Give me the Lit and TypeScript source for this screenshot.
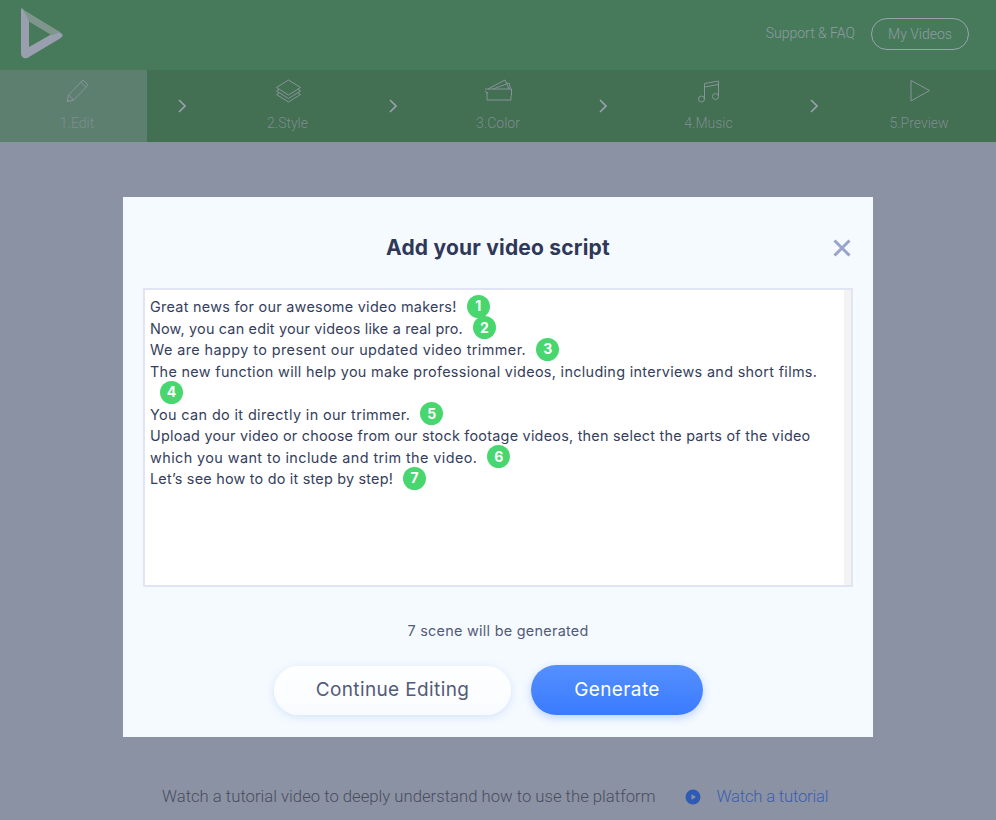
import { LitElement, html, css, svg } from "lit";
import { customElement } from "lit/decorators.js";
import { styleMap } from "lit/directives/style-map.js";

@customElement("app-root")
export class AppRoot extends LitElement {
  static styles = css`
    :host {
      display: block;
      position: relative;
      width: 996px;
      height: 820px;
      overflow: hidden;
      background: #8b92a4;
      font-family: Roboto, "Liberation Sans", sans-serif;
      font-weight: 300;
    }
    .top {
      height: 70px;
      background: #477a5b;
      display: flex;
      align-items: center;
      justify-content: space-between;
      padding: 0 27px 2px 20px;
      box-sizing: border-box;
    }
    .logo { display: block; width: 44px; height: 52px; }
    .nav { display: flex; align-items: center; gap: 16px; color: #8f9aa3; font-size: 14px; }
    .support { position: relative; top: -1px; }
    .myvideos {
      width: 98px;
      height: 32px;
      box-sizing: border-box;
      border: 1px solid #9aa1b0;
      border-radius: 16px;
      display: flex;
      align-items: center;
      justify-content: center;
    }
    .steps {
      height: 72px;
      background: #436f52;
      display: flex;
      color: #7d8e90;
      font-size: 14px;
    }
    .step {
      width: 147px;
      flex: none;
      display: flex;
      flex-direction: column;
      align-items: center;
      padding: 8px 0 0 7px;
      box-sizing: border-box;
      gap: 9px;
    }
    .step.active { background: #5d7f70; }
    .step span { line-height: 18px; }
    .step svg {
      display: block;
      width: 27px;
      height: 27px;
      fill: none;
      stroke: #87949a;
      stroke-width: 1;
      stroke-linejoin: round;
    }
    .sep {
      width: 63.5px;
      flex: none;
      display: flex;
      align-items: center;
      justify-content: center;
      padding: 0 0 0 7px;
      box-sizing: border-box;
    }
    .sep svg {
      display: block;
      width: 8px;
      height: 14px;
      fill: none;
      stroke: #9aa1b0;
      stroke-width: 1.6;
    }
    .tutorial {
      position: absolute;
      left: 162px;
      top: 787px;
      display: flex;
      align-items: center;
      font-size: 16.7px;
      line-height: 20px;
      color: #4a4e5c;
    }
    .tutorial svg { display: block; width: 16px; height: 16px; margin: 0 15px 0 30px; }
    .tutorial .link { color: #3b5fb0; letter-spacing: -0.2px; }
    .overlay {
      position: absolute;
      left: 123px;
      top: 197px;
      width: 750px;
      height: 540px;
      background: #f5faff;
      box-sizing: border-box;
      padding: 37px 20px 0;
      display: flex;
      flex-direction: column;
      align-items: center;
      font-family: Inter, "Noto Sans", sans-serif;
      font-weight: 400;
      color: #353e5c;
    }
    h1 {
      margin: 0;
      font-size: 21px;
      line-height: 28px;
      font-weight: 700;
      color: #2f3857;
      letter-spacing: 0.2px;
    }
    .close {
      position: absolute;
      right: 22px;
      top: 42px;
      width: 18px;
      height: 18px;
      display: block;
      stroke: #98a4cc;
      stroke-width: 3;
      fill: none;
    }
    .area {
      margin-top: 26px;
      width: 710px;
      height: 299px;
      flex: none;
      box-sizing: border-box;
      border: 2px solid #e0e4f3;
      background: #fff;
      display: flex;
    }
    .lines {
      flex: 1;
      padding: 6px 0 0 5px;
      font-size: 14.4px;
      line-height: 21.5px;
      color: #353e5c;
    }
    .line { display: block; }
    .bar { width: 7px; background: #f3f3f3; flex: none; }
    .badge {
      display: inline-flex;
      align-items: center;
      justify-content: center;
      width: 23px;
      height: 23px;
      margin: -2px 0 -2px 10px;
      vertical-align: middle;
      position: relative;
      top: -2px;
      border-radius: 50%;
      background: #48d66e;
      color: #fff;
      font-size: 14px;
      font-weight: 700;
      line-height: 1;
      letter-spacing: 0;
    }
    .count {
      margin-top: 34px;
      font-size: 14.4px;
      line-height: 20px;
      color: #535b78;
      letter-spacing: 0.28px;
    }
    .buttons { display: flex; align-items: center; gap: 20px; margin: 24px 19px 0 0; }
    .btn {
      display: flex;
      align-items: center;
      justify-content: center;
      box-sizing: border-box;
      font-size: 19px;
      letter-spacing: 0.38px;
      padding-bottom: 2px;
    }
    .ghost {
      width: 237px;
      height: 49px;
      border-radius: 25px;
      background: linear-gradient(#ffffff, #f8fbff);
      color: #535b78;
      box-shadow: 0 2px 8px rgba(120, 160, 230, 0.25);
    }
    .primary {
      width: 172px;
      height: 50px;
      border-radius: 25px;
      background: linear-gradient(#5590ff, #3a7bff);
      color: #fff;
      box-shadow: 0 3px 8px rgba(60, 120, 255, 0.3);
    }
  `;

  render() {
    const stepsData: [string, unknown][] = [
      ["1.Edit", svg`<path d="M3 23.500l1.600-6.500L19 2l5.200 5L9.600 22z M3 23.500l6.600-1.500 M4.600 17l5 5 M16.800 4.200l5.200 5.100"/>`],
      ["2.Style", svg`<path d="M14.500 2l12 7.500-12 7.500-12-7.500z"/><path d="M5 11.300L2.500 13l12 7.500 12-7.500-2.500-1.700"/><path d="M5 15L2.500 16.500l12 7.500 12-7.500L24 15"/>`],
      ["3.Color", svg`<path d="M-.5 11h27v6.500l-.5.5v4H2v-7.500L-.5 13z"/><path d="M3 11L20 2l4 9"/><path d="M8 11L24 5 25.500 11"/><circle cx="2.500" cy="15" r=".4"/>`],
      ["4.Music", svg`<path d="M9.500 21V5.500l14-2.500V18"/><path d="M9.500 9l14-2.500"/><circle cx="6.500" cy="21" r="3"/><circle cx="20.500" cy="18.500" r="3"/>`],
      ["5.Preview", svg`<path d="M5 2.500v20.500L23.500 12.500z"/>`],
    ];
    // letter-spacing per line, fitted to the measured width of each line
    const script: [string, number | null, number][] = [
      ["Great news for our awesome video makers!", 1, 0.28],
      ["Now, you can edit your videos like a real pro.", 2, 0.19],
      ["We are happy to present our updated video trimmer.", 3, 0.43],
      ["The new function will help you make professional videos, including interviews and short films.", 4, 0.32],
      ["You can do it directly in our trimmer.", 5, 0.38],
      ["Upload your video or choose from our stock footage videos, then select the parts of the video", null, 0.24],
      ["which you want to include and trim the video.", 6, 0.42],
      ["Let’s see how to do it step by step!", 7, 0.22],
    ];
    return html`
      <div class="top">
        <svg class="logo" viewBox="0 0 44 52">
          <path fill="#9a9fb0" fill-rule="evenodd" d="M1 1.500c0-1 .6-1.400 1.500-.9l5 7.400L40 24.500c2.500 1.500 3 2.500 2.500 3.600-.4 1-1.300 1.700-2.500 2.400L9 49c-2 1.200-3.500 1.500-5 .9C2 49.100 1 47.500 1 45zM9 13v26l22-12.500z"/>
          <path fill="#7f968c" d="M3 1.500L40 24 32 27.200 9 13.500C7 9 5 5 3 1.500z"/>
        </svg>
        <div class="nav">
          <span class="support">Support &amp; FAQ</span>
          <span class="myvideos">My Videos</span>
        </div>
      </div>
      <div class="steps">
        ${stepsData.map(
          ([label, icon], i) => html`
            ${i > 0
              ? html`<div class="sep"><svg viewBox="0 0 8 14"><path d="M1 1l6 6-6 6"/></svg></div>`
              : ""}
            <div class="step ${i === 0 ? "active" : ""}">
              <svg viewBox="0 0 27 27">${icon}</svg>
              <span>${label}</span>
            </div>
          `
        )}
      </div>
      <div class="tutorial">
        <span>Watch a tutorial video to deeply understand how to use the platform</span>
        <svg viewBox="0 0 16 16"><circle cx="8" cy="8" r="7.500" fill="#2f5bb5"/><path d="M6.500 5.200v5.600L11 8z" fill="#8b92a4"/></svg>
        <span class="link">Watch a tutorial</span>
      </div>
      <div class="overlay">
        <h1>Add your video script</h1>
        <svg class="close" viewBox="0 0 18 18"><path d="M1.500 1.500l15 15M16.500 1.500l-15 15"/></svg>
        <div class="area">
          <div class="lines">
            ${script.map(
              ([t, n, ls]) => html`<span class="line" style=${styleMap({ letterSpacing: `${ls}px` })}
                >${t}${n === null ? "" : html`<span class="badge">${n}</span>`}</span
              >`
            )}
          </div>
          <div class="bar"></div>
        </div>
        <div class="count">7 scene will be generated</div>
        <div class="buttons">
          <div class="btn ghost">Continue Editing</div>
          <div class="btn primary">Generate</div>
        </div>
      </div>
    `;
  }
}
